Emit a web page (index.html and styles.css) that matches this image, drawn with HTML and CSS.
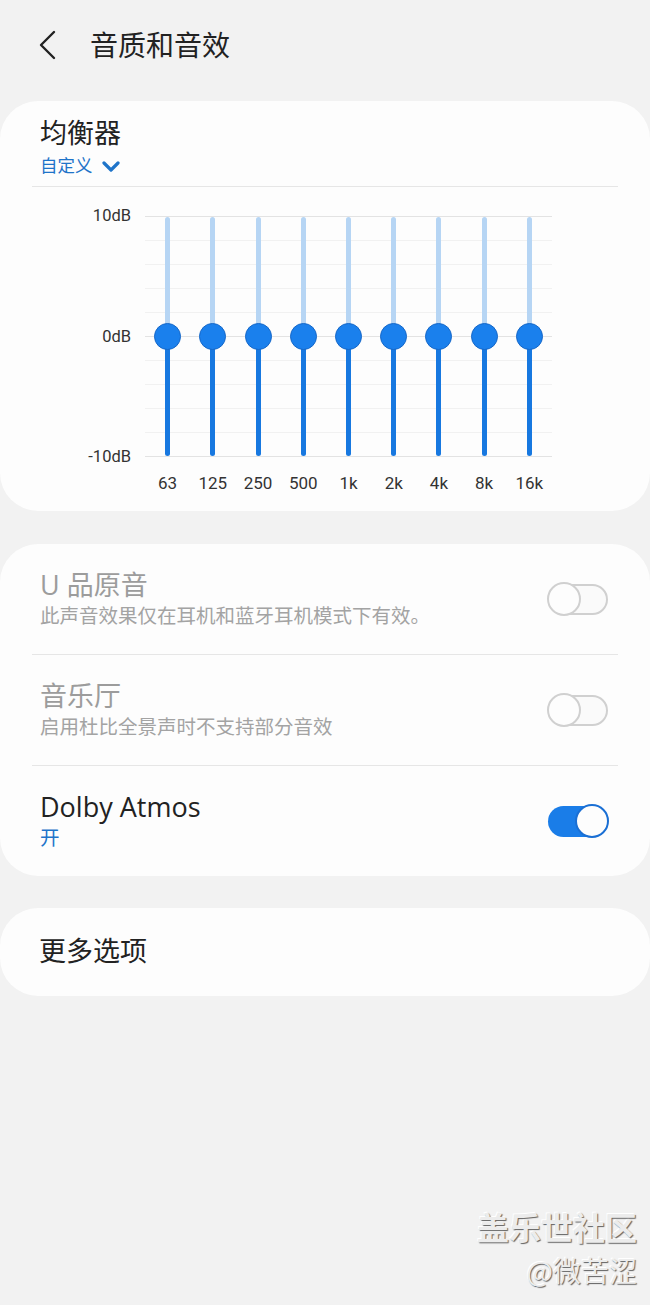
FILE: index.html
```html
<!DOCTYPE html>
<html lang="zh-CN">
<head>
<meta charset="utf-8">
<title>音质和音效</title>
<link rel="stylesheet" href="styles.css">
</head>
<body>
<header class="topbar">
  <svg class="back" width="20" height="30" viewBox="0 0 20 30"><path d="M16 2 L3 15 L16 28" fill="none" stroke="#222" stroke-width="2.4" stroke-linecap="round" stroke-linejoin="round"/></svg>
  <h1 class="page-title">音质和音效</h1>
</header>

<section class="card eq-card">
  <div class="eq-head">
    <div class="eq-title">均衡器</div>
    <div class="eq-preset">自定义
      <svg width="18" height="11" viewBox="0 0 18 11"><path d="M2 2 L9 9 L16 2" fill="none" stroke="#1f74c9" stroke-width="3.2" stroke-linecap="round" stroke-linejoin="round"/></svg>
    </div>
  </div>
  <div class="divider"></div>
  <div class="eq">
    <div class="axis"><span>10dB</span><span>0dB</span><span>-10dB</span></div>
    <div class="plot">
      <div class="bands">
        <div class="band"><div class="track"><i class="knob"></i></div></div>
        <div class="band"><div class="track"><i class="knob"></i></div></div>
        <div class="band"><div class="track"><i class="knob"></i></div></div>
        <div class="band"><div class="track"><i class="knob"></i></div></div>
        <div class="band"><div class="track"><i class="knob"></i></div></div>
        <div class="band"><div class="track"><i class="knob"></i></div></div>
        <div class="band"><div class="track"><i class="knob"></i></div></div>
        <div class="band"><div class="track"><i class="knob"></i></div></div>
        <div class="band"><div class="track"><i class="knob"></i></div></div>
      </div>
      <div class="freqs">
        <span>63</span><span>125</span><span>250</span><span>500</span><span>1k</span><span>2k</span><span>4k</span><span>8k</span><span>16k</span>
      </div>
    </div>
  </div>
</section>

<section class="card list-card">
  <div class="row disabled">
    <div class="row-text">
      <div class="row-title">U 品原音</div>
      <div class="row-sub">此声音效果仅在耳机和蓝牙耳机模式下有效。</div>
    </div>
    <div class="switch off"><i class="thumb"></i></div>
  </div>
  <div class="divider"></div>
  <div class="row disabled">
    <div class="row-text">
      <div class="row-title">音乐厅</div>
      <div class="row-sub">启用杜比全景声时不支持部分音效</div>
    </div>
    <div class="switch off"><i class="thumb"></i></div>
  </div>
  <div class="divider"></div>
  <div class="row">
    <div class="row-text">
      <div class="row-title">Dolby Atmos</div>
      <div class="row-sub on-text">开</div>
    </div>
    <div class="switch on"><i class="thumb"></i></div>
  </div>
</section>

<section class="card more-card">
  <div class="more">更多选项</div>
</section>

<footer class="watermark">
  <div class="wm1">盖乐世社区</div>
  <div class="wm2">@微苦涩</div>
</footer>
</body>
</html>
```

FILE: styles.css
```css
* { box-sizing: border-box; }
html, body { margin: 0; padding: 0; }
body {
  background: #f2f2f2;
  font-family: Roboto, "Noto Sans CJK SC", sans-serif;
  color: #222;
  min-height: 1305px;
  display: flex;
  flex-direction: column;
}

.topbar {
  height: 91px;
  display: flex;
  align-items: center;
  padding-left: 38px;
  margin-bottom: 10px;
}
.back { display: block; margin-top: -1px; }
.page-title {
  margin: 2px 0 0 32px;
  font-size: 28px;
  font-weight: 400;
  line-height: 34px;
  color: #222;
}

.card {
  background: #fdfdfd;
  border-radius: 38px;
  padding: 0 32px;
}
.divider { height: 1px; background: #e6e6e6; }

.eq-card { padding-top: 17px; padding-bottom: 18px; margin-bottom: 33px; }
.eq-head { padding: 0 8px 9px; }
.eq-title { font-size: 27px; line-height: 32px; }
.eq-preset {
  margin-top: 5px;
  font-size: 17.5px;
  line-height: 22px;
  color: #1f74c9;
  display: flex;
  align-items: center;
  gap: 9px;
}
.eq-preset svg { display: block; margin-top: 1px; }

.eq { display: flex; margin-top: 29px; }
.axis {
  width: 99px;
  margin-top: -9px;
  height: 259px;
  display: flex;
  flex-direction: column;
  justify-content: space-between;
  align-items: flex-end;
  font-size: 16.5px;
  line-height: 18px;
  color: #333;
}
.plot { width: 407px; margin-left: 14px; }
.bands {
  height: 241px;
  display: grid;
  grid-template-columns: repeat(9, 1fr);
  background:
    linear-gradient(#e3e3e3, #e3e3e3) 0 0 / 100% 1px no-repeat,
    linear-gradient(#e3e3e3, #e3e3e3) 0 120px / 100% 1px no-repeat,
    linear-gradient(#e3e3e3, #e3e3e3) 0 240px / 100% 1px no-repeat,
    repeating-linear-gradient(to bottom, #f1f1f1 0 1px, transparent 1px 24px);
}
.band { display: flex; justify-content: center; padding-top: 1px; padding-bottom: 1px; }
.track {
  position: relative;
  width: 5px;
  border-radius: 3px;
  background: linear-gradient(to bottom, #b6d5f4 0 50%, #1778e0 50% 100%);
}
.knob {
  position: absolute;
  left: 50%;
  top: 50%;
  width: 27px;
  height: 27px;
  margin: -13.5px 0 0 -13.5px;
  border-radius: 50%;
  background: #1a80ed;
  border: 1px solid #1567c8;
}
.freqs {
  display: grid;
  grid-template-columns: repeat(9, 1fr);
  margin-top: 16px;
  font-size: 17px;
  line-height: 20px;
  color: #333;
  text-align: center;
}

.list-card { margin-bottom: 32px; }
.row {
  display: flex;
  align-items: center;
  justify-content: space-between;
  padding: 25px 10px 25px 8px;
}
.row-title {
  font-family: "Open Sans", "Noto Sans CJK SC", sans-serif;
  font-size: 27px;
  line-height: 32px;
  color: #222;
}
.row-sub { margin-top: 4px; font-size: 19.5px; line-height: 24px; color: #666; }
.disabled .row-title { color: #9c9c9c; }
.disabled .row-sub { color: #a3a3a3; }
.on-text { color: #1f74c9; }

.switch {
  position: relative;
  width: 60px;
  height: 31px;
  border-radius: 16px;
}
.switch.off { border: 2px solid #d0d0d0; background: #fafafa; }
.switch.on { background: #1a7de8; }
.thumb {
  position: absolute;
  top: 50%;
  width: 34px;
  height: 34px;
  margin-top: -17px;
  border-radius: 50%;
  background: #fdfdfd;
}
.switch.off .thumb { left: -3px; border: 2px solid #d0d0d0; }
.switch.on .thumb { right: -1px; border: 2px solid #1a6fd4; }

.more-card { height: 88px; display: flex; align-items: center; }
.more { padding-left: 7px; font-size: 27px; line-height: 32px; color: #222; }

.watermark {
  margin-top: auto;
  padding: 0 13px 17px 0;
  display: flex;
  flex-direction: column;
  align-items: flex-end;
  color: #ececec;
  text-shadow: 1px 1px 1px rgba(0,0,0,0.6), -1px -1px 0 #fff;
  font-family: "Noto Sans CJK SC", sans-serif;
}
.wm1 { font-size: 32px; line-height: 40px; font-weight: 700; }
.wm2 { font-size: 28px; line-height: 36px; margin-top: 6px; }
```
